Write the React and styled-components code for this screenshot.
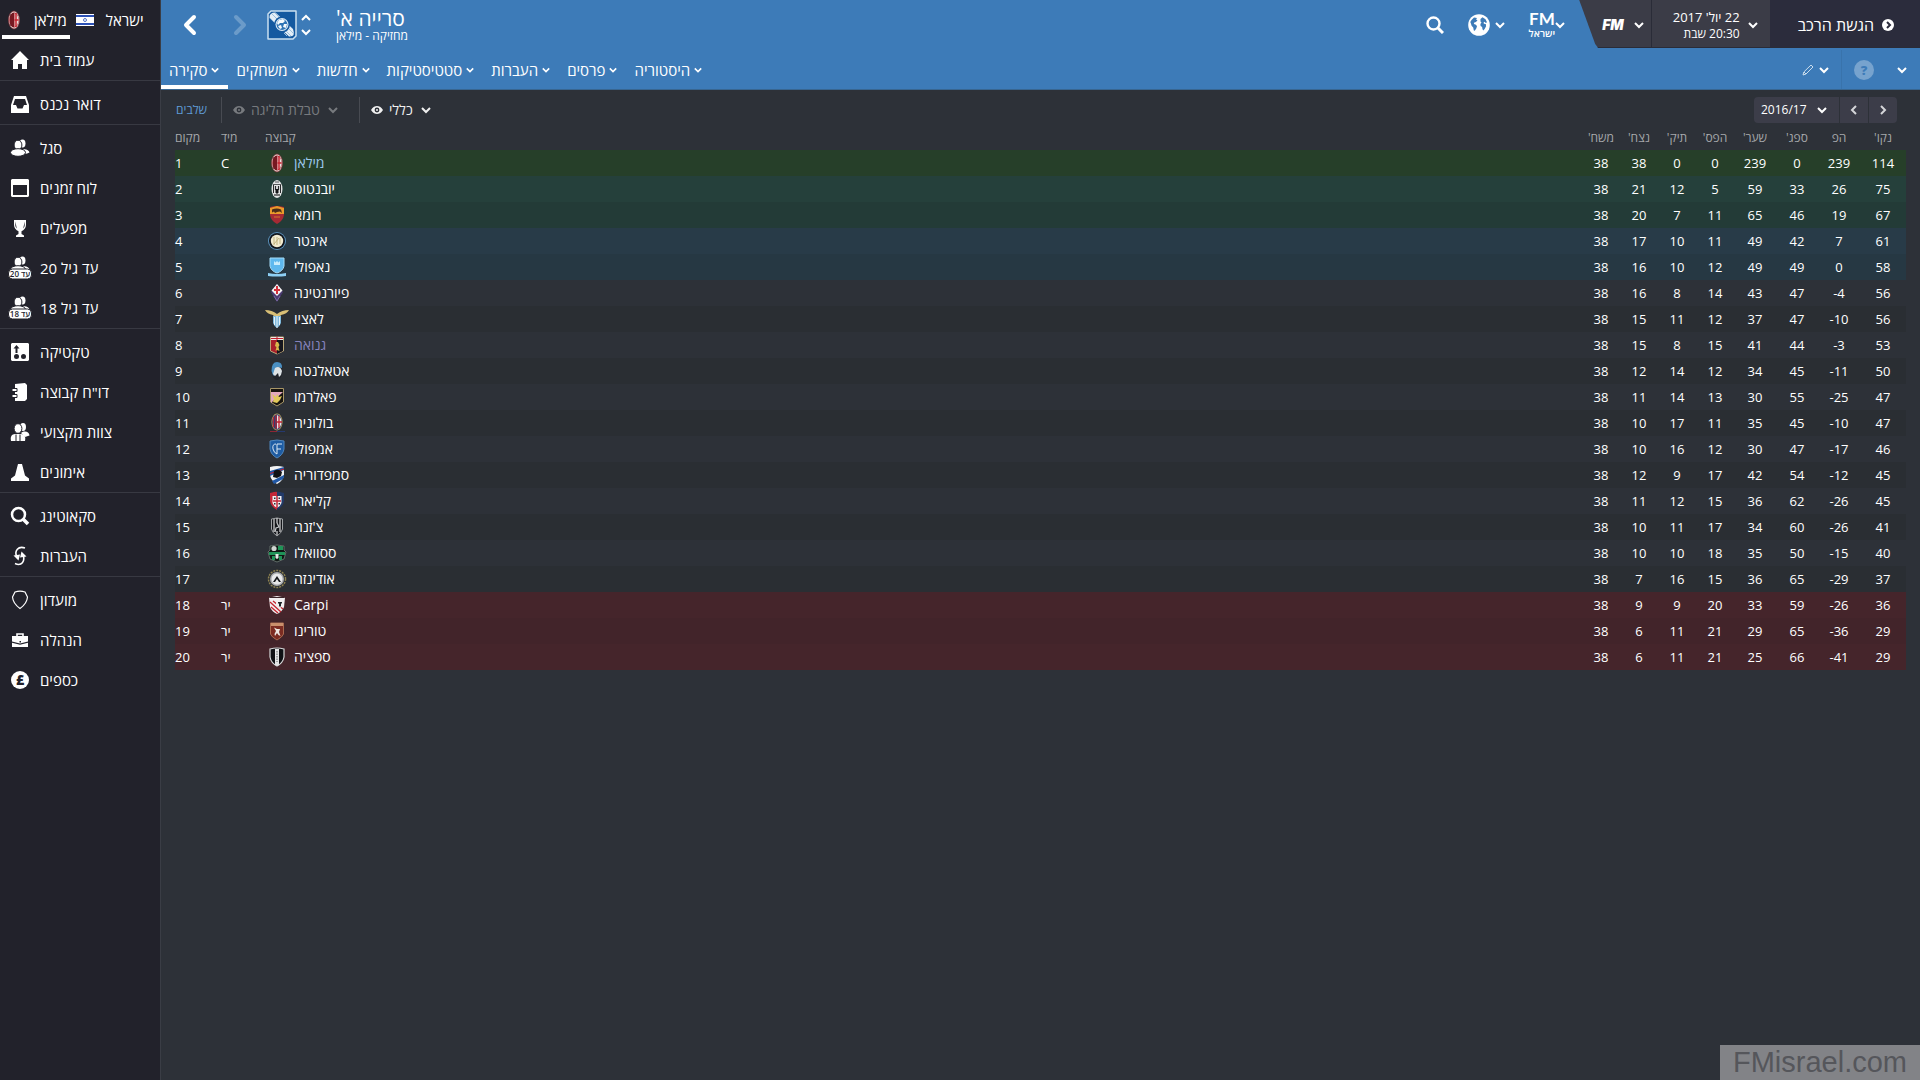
import styled, { createGlobalStyle, css } from "styled-components";

const GlobalStyle = createGlobalStyle`
  * {
    box-sizing: border-box;
  }
  body {
    margin: 0;
    background: #2d3138;
    color: #ffffff;
    font-family: "Open Sans", "Noto Sans", "DejaVu Sans", sans-serif;
    font-size: 13px;
    line-height: 18px;
  }
  button,
  select {
    margin: 0;
    padding: 0;
    border: 0;
    background: none;
    color: inherit;
    font: inherit;
    cursor: pointer;
  }
  a {
    color: inherit;
    text-decoration: none;
  }
  svg {
    display: block;
    flex: none;
  }
`;

/* ---------- icons ---------- */

const Chevron = ({ size = 10, dir = "down", weight = 2 }) => {
  const paths = {
    down: "M1 3l4 4 4-4",
    up: "M1 7l4-4 4 4",
    left: "M7 1L3 5l4 4",
    right: "M3 1l4 4-4 4",
  };
  return (
    <svg width={size} height={size} viewBox="0 0 10 10" fill="none" stroke="currentColor" strokeWidth={weight} aria-hidden="true">
      <path d={paths[dir]} />
    </svg>
  );
};

const Arrow = ({ dir }) => (
  <svg width="14" height="22" viewBox="0 0 14 22" fill="none" stroke="currentColor" strokeWidth="4" strokeLinecap="round" strokeLinejoin="round" aria-hidden="true">
    <path d={dir === "left" ? "M11 3L3 11l8 8" : "M3 3l8 8-8 8"} />
  </svg>
);

const Eye = () => (
  <svg width="12" height="10" viewBox="0 0 12 10" aria-hidden="true">
    <path fill="currentColor" fillRule="evenodd" d="M0 5C2 1.800 4 1 6 1s4 .8 6 4c-2 3.200-4 4-6 4S2 8.200 0 5zm6-2.400a2.400 2.400 0 1 0 0 4.800 2.400 2.400 0 0 0 0-4.800z" />
    <circle cx="6" cy="5" r="1" fill="currentColor" />
  </svg>
);

const Search = ({ size = 18 }) => (
  <svg width={size} height={size} viewBox="0 0 18 18" fill="none" stroke="currentColor" aria-hidden="true">
    <circle cx="7.500" cy="7.500" r="6" strokeWidth="2.400" />
    <path d="M12 12l5 5" strokeWidth="3" />
  </svg>
);

const Globe = () => (
  <svg width="22" height="22" viewBox="0 0 22 22" aria-hidden="true">
    <circle cx="11" cy="11" r="10.800" fill="#fff" />
    <g fill="#3d7bb8">
      <path d="M3.500 6l2.500-2.500 3 .5-1 1.500 1.500.8-1.500 1.800-1.700.4-.5 1.400 1.700.7 1.500 1.300-.6 2.300-1.600 2.600-1-.2-.6-3-1.600-1.800-.7-2.200-.6-1.500z" />
      <path d="M12.500 5l2-1.800 3 2 1.500 3-1.300.8-1-1.300-1.100.8.3 1.300 1.900.3.3 2.100-1.500 2.700-1.300 1.600-.8-1.200-.4-2.300-1.500-1.100-.2-2 1.100-1.400-1-.9z" />
    </g>
  </svg>
);

const Pencil = () => (
  <svg width="12" height="12" viewBox="0 0 12 12" fill="none" stroke="#c9dcec" strokeWidth="1" aria-hidden="true">
    <path d="M1 11l.8-3L9 1l2 2-7 7zM2 8l2 2" />
  </svg>
);

const GoIcon = () => (
  <svg width="12" height="12" viewBox="0 0 12 12" aria-hidden="true">
    <circle cx="6" cy="6" r="6" fill="#fff" />
    <path d="M5 3l3 3-3 3" fill="none" stroke="#2b2c3c" strokeWidth="2" />
  </svg>
);

const LeagueBadge = () => (
  <svg width="30" height="30" viewBox="0 0 30 30" aria-hidden="true">
    <path d="M4 1h25v25l-3 3H1V4z" fill="#1459a0" stroke="#c9dff0" strokeWidth="1.500" strokeLinejoin="round" />
    <path d="M2.500 8q-.5-5.500 6-5.500L26 19q3 8-4 7.500z" fill="#e4eef7" />
    <path d="M8 3l6 6M5 4l7 7M3 8l6 6M19 21l5 5M22 19l5 5M17 23l3 3" stroke="#9cc0de" strokeWidth="1" />
    <circle cx="15" cy="14.500" r="8" fill="#1459a0" />
    <circle cx="15" cy="14.500" r="6.500" fill="#dcebf6" />
    <circle cx="15" cy="14.500" r="5.400" fill="#2f74b5" />
    <path d="M12 10l4-1 2 2-2 2h-3l-2 2-1-2zM17 14h3l-1 4-3-1zM11 16l3-1 1 3-2 1z" fill="#f4f9fc" />
  </svg>
);

const people = (
  <>
    <ellipse cx="12.500" cy="5.500" rx="3" ry="4" />
    <path d="M11 12c4-2 8 0 8.500 2.500-2.500 1.500-5 1.500-7 1z" />
    <ellipse cx="8" cy="7" rx="3.900" ry="4.800" stroke="#22222b" strokeWidth="1" />
    <ellipse cx="8" cy="14.500" rx="7.500" ry="3.800" stroke="#22222b" strokeWidth="1" />
  </>
);

const NAV_ICONS = {
  home: <path d="M10 1l9 9h-2v9h-5v-5H8v5H3v-9H1z" />,
  inbox: <path fillRule="evenodd" d="M4 2h12l3 9v8H1v-8zM5 5l-2 6h3l1.500 3.500h5L14 11h3l-2-6z" />,
  squad: people,
  calendar: <path fillRule="evenodd" d="M2 1h16l1 1v16l-1 1H2l-1-1V2zm1 6v10h14V7z" />,
  trophy: (
    <path fillRule="evenodd" d="M4 2h12v5c0 3-2 5-4.500 6.200V16L14 17.500V19H6v-1.500L8.500 16v-2.800C6 12 4 10 4 7zm1.300 1.500V7c0 1.500.7 2.500 1.500 3.500zm9.400 0L13.200 10.500c.8-1 1.500-2 1.500-3.500z" />
  ),
  tactics: (
    <path fillRule="evenodd" d="M2 1h16l1 1v16l-1 1H2l-1-1V2zm4.500 2L3.500 6.500h2V11h2V6.500h2zm0 9a2.500 2.500 0 1 0 0 5 2.500 2.500 0 0 0 0-5zm7 0a2.500 2.500 0 1 0 0 5 2.500 2.500 0 0 0 0-5z" />
  ),
  report: (
    <>
      <path d="M5 2l10-1 2 2v14l-2 2H5z" />
      <path d="M2 6.500h5v3H2zM2 12.500h5v3H2z" stroke="#22222b" strokeWidth="1" />
    </>
  ),
  staff: (
    <>
      <ellipse cx="13" cy="5" rx="3" ry="4" />
      <path d="M11 11c4-3 8-1 8.500 2.500L15 15z" />
      <ellipse cx="8" cy="6.500" rx="3.900" ry="4.800" stroke="#22222b" strokeWidth="1" />
      <path d="M1 19c-1-5 1-6.500 4-7h6c3 .5 5 2 4 7z" />
      <path d="M6 12.500V19M10 12.500V19" stroke="#22222b" strokeWidth="1" />
    </>
  ),
  cone: <path d="M8 2h4l3 11.500 4 3V19H1v-2.500l4-3z" />,
  search: (
    <g fill="none" stroke="currentColor">
      <circle cx="8.500" cy="8.500" r="6.500" strokeWidth="2.500" />
      <path d="M13 13l5 5" strokeWidth="3.500" />
    </g>
  ),
  transfers: (
    <>
      <path d="M15 2C8-.5 4.500 5 6.500 10M5 17.500c6.500 3 10.500-2 8-9" fill="none" stroke="currentColor" strokeWidth="1.600" />
      <path d="M3.500 9.500l6.500-1-1.500 6zM16.500 10.500l-6.500 1 1.500-6z" />
    </>
  ),
  club: <path d="M5 2q5-1.800 10 0l2.500 5q-.5 6.500-7.500 11.500Q3 13.500 2.500 7z" fill="none" stroke="currentColor" strokeWidth="1.200" />,
  board: (
    <>
      <path d="M7 6V4h6v2" fill="none" stroke="currentColor" strokeWidth="1.600" />
      <path d="M2 6h16v5.500l-8 2-8-2zM2 12.800l8 2 8-2V17H2z" />
      <path d="M9.500 11h1.500v1.500H9.500z" fill="#22222b" />
    </>
  ),
  finance: <circle cx="10" cy="10" r="9" />,
};

const NavIcon = ({ name, age }) => (
  <svg width="24" height="24" viewBox="-2 -2 24 24" fill="currentColor" aria-hidden="true">
    {age ? (
      <>
        <g transform="translate(0 -3)">{people}</g>
        <rect x="-1.500" y="11" width="23" height="10" rx="4" stroke="#22222b" strokeWidth="1" />
        <AgeText x="10" y="19" textAnchor="middle">
          {age}
        </AgeText>
      </>
    ) : (
      NAV_ICONS[name]
    )}
    {name === "finance" && (
      <PoundText x="10" y="15" textAnchor="middle">
        £
      </PoundText>
    )}
  </svg>
);

const AgeText = styled.text`
  font-size: 8px;
  font-weight: 600;
  fill: #22222b;
  direction: rtl;
`;

const PoundText = styled.text`
  font-size: 14px;
  font-weight: 800;
  fill: #22222b;
`;

const SHIELD = "M5 4q7-2 14 0v8q-1 6-7 9-6-3-7-9z";

const CRESTS = {
  milan: (
    <>
      <ellipse cx="12" cy="12" rx="5.500" ry="9" fill="#d8cfcb" />
      <ellipse cx="12" cy="12" rx="4.700" ry="7.500" fill="#b3202c" />
      <path d="M9 6v12M11 5v14" stroke="#3a1016" strokeWidth="1" />
      <path d="M12.500 5q4 2 4 7t-4 7z" fill="#e9e3df" />
      <path d="M14 5v14M12.500 12h4" stroke="#c8202e" strokeWidth="1.500" />
      <ellipse cx="12" cy="12" rx="5.500" ry="9" fill="none" stroke="#8c2630" strokeWidth=".6" />
    </>
  ),
  juventus: (
    <>
      <ellipse cx="12" cy="12" rx="5.500" ry="9" fill="#e4e5e6" />
      <path d="M8.500 8v8M15.500 8v8" stroke="#2a2b2d" strokeWidth="1" />
      <path d="M10.500 9v4M13.500 9v4M12 12v7M10 17v2M14 17v2" stroke="#2a2b2d" strokeWidth="1.200" />
      <path d="M8 7.500h8M10 5h4" stroke="#55575a" strokeWidth="1" />
      <path d="M10.500 12h3v4h-3z" fill="#151618" />
    </>
  ),
  roma: (
    <>
      <path d={SHIELD} fill="#a52a34" />
      <path d="M5 5l7-2 7 2v6H5z" fill="#e99a2b" />
      <path d="M7 6.500q5-2 9 0l1 3.500-2-1.500-3 .5-2 1-1-1.500-2 1z" fill="#4a2c1a" />
      <path d="M9 14h6" stroke="#d9722f" strokeWidth="1" />
    </>
  ),
  inter: (
    <>
      <circle cx="12" cy="12" r="9" fill="#5c93bd" />
      <circle cx="12" cy="12" r="8" fill="#11151c" />
      <circle cx="12" cy="12" r="6.200" fill="#f1ead0" />
      <path d="M9 8v8M12 8v8M9 15l5-6M15 9v6" stroke="#b9a970" strokeWidth=".8" fill="none" />
    </>
  ),
  napoli: (
    <>
      <path d="M5 3h14v8q-1 5-7 7-6-2-7-7z" fill="#5fb9ee" />
      <path d="M5 3h14v8q-1 5-7 7-6-2-7-7z" fill="none" stroke="#a5dcf8" strokeWidth="1" />
      <path d="M9 6l1.500 1.500L12 6l1.500 1.500L15 6v4H9z" fill="#c9ecfb" />
      <path d="M3 18q9 2 18 0v3q-9 1-18 0z" fill="#8dd0f5" />
    </>
  ),
  fiorentina: (
    <>
      <path d="M12 3l6 8-6 10-6-10z" fill="#4b3a72" />
      <path d="M12 3l5.500 6.500L12 15 6.500 9.500z" fill="#f3f0f1" />
      <path d="M12 5v8M9 9h6" stroke="#d2303c" strokeWidth="2" />
      <path d="M9 15l3 5 3-5" fill="none" stroke="#7a6aa0" strokeWidth="1" />
    </>
  ),
  lazio: (
    <>
      <path d="M0 3q7 0 12 4 5-4 12-4-2 4-8 5l-2 3h-4L8 8Q2 7 0 3z" fill="#d9bf76" />
      <path d="M8 9h8v7q-1 3-4 5-3-2-4-5z" fill="#7fb9dd" />
      <path d="M12 9v12M9.500 10v8M14.500 10v8" stroke="#e6f2f9" strokeWidth="1" />
    </>
  ),
  genoa: (
    <>
      <path d="M5.500 4h13v14l-6.500 3-6.500-3z" fill="#a91f2b" stroke="#b9a778" strokeWidth="1" />
      <path d="M12 7h6v11l-6 3z" fill="#15161d" />
      <path d="M6 4h12v3H6z" fill="#eceaea" />
      <path d="M12 3.500V7M6 5.500h12" stroke="#c4202e" strokeWidth="1" />
      <path d="M11 9l2 0 1.500 3-1 2 1 4-2.500-1-1.500 1 1-4-1.500-1z" fill="#d9b74c" />
    </>
  ),
  atalanta: (
    <>
      <ellipse cx="12" cy="12" rx="5.500" ry="9" fill="#20242b" />
      <path d="M6.500 12q0-9 5.500-9t5 6l-4-1-4 9q-2-2-2.500-5z" fill="#4a8fc2" />
      <path d="M10 9q5-3 7 3l-1 4-2 2-1-4-3 3-2-2z" fill="#dde2e5" />
    </>
  ),
  palermo: (
    <>
      <path d="M5.500 3.500h13V17L12 21l-6.500-4z" fill="#17140f" stroke="#a89667" strokeWidth="1" />
      <path d="M6 7h12L6 18z" fill="#e3a9bd" />
      <path d="M7 9l4 3 1-3 2 3 3-1-2 4-3 3-4-1 1-3z" fill="#e2c95a" />
    </>
  ),
  bologna: (
    <>
      <ellipse cx="12" cy="11" rx="5.500" ry="8.500" fill="#c9a95c" />
      <ellipse cx="12" cy="11" rx="4.800" ry="7.800" fill="#2a3f7a" />
      <path d="M8.500 6v10M11 4v14" stroke="#b02535" strokeWidth="1.300" />
      <path d="M12 4q4.500 2 4.500 7t-4.500 7z" fill="#e8e6e8" />
      <path d="M14 5v12M12 11h5" stroke="#c4202e" strokeWidth="1.300" />
      <path d="M5 20.500h7" stroke="#8c2634" strokeWidth="1" />
      <path d="M12 20.500h8" stroke="#25396e" strokeWidth="1" />
    </>
  ),
  empoli: (
    <>
      <path d={SHIELD} fill="#1e5ca3" stroke="#4f86bd" strokeWidth="1" />
      <path d="M11 7q-4 0-3 5 1 4 4 5M12 7h5M12 7v10M12 12h4" fill="none" stroke="#dbe8f4" strokeWidth="1" />
    </>
  ),
  sampdoria: (
    <>
      <path d={SHIELD} fill="#f0f2f4" />
      <path d="M5 8l14-4v3L5 13z" fill="#2158a5" />
      <path d="M7 18l12-6v2l-1 2-9 5z" fill="#2158a5" />
      <path d="M5 10.500l14-4.500" stroke="#c4202e" strokeWidth="1" />
      <path d="M9 8q4-3 8 1l-1 4-4 2-4-1z" fill="#101216" />
    </>
  ),
  cagliari: (
    <>
      <path d="M5 4q7-2 7-1v18q-6-3-7-9z" fill="#c32738" />
      <path d="M19 4q-7-2-7-1v18q6-3 7-9z" fill="#223a68" />
      <path d="M7.500 7h9v7q-1 3-4.500 5-3.500-2-4.500-5z" fill="#f1eff0" />
      <path d="M12 7v12M8 12h8" stroke="#c32738" strokeWidth="1.500" />
      <path d="M9 8.500h1.500V10H9zM13.500 8.500H15V10h-1.500zM9 14h1.500v1.500H9zM13.500 14H15v1.500h-1.500z" fill="#2a2f3a" />
    </>
  ),
  cesena: (
    <>
      <path d="M6.500 4q5.500-2 11 0v10q-1 4-5.500 7-4.500-3-5.500-7z" fill="#14161a" stroke="#9fa2a5" strokeWidth="1" />
      <path d="M9 4v13M15 4v13M12 3v5M12 16v4" stroke="#d9dadb" strokeWidth="1.200" />
      <path d="M12 8l2 4-3 1-1 4" fill="none" stroke="#c3c6c8" strokeWidth="1.200" />
    </>
  ),
  sassuolo: (
    <>
      <path d="M5 5q7-2 14 0v4l2 2-2 7-7 3-7-3-2-7 2-2z" fill="#101815" stroke="#6f7d76" strokeWidth=".8" />
      <path d="M4 11h16v3H4zM7 15h3v4H7zM14 15h3v4h-3zM13 5h5v4h-5z" fill="#1f9358" />
      <circle cx="9" cy="7.500" r="2.600" fill="#cfd5d2" />
      <path d="M10.500 13h3v4l-1.500 1-1.500-1z" fill="#e3e8e5" />
    </>
  ),
  udinese: (
    <>
      <circle cx="12" cy="12" r="8.500" fill="none" stroke="#8e8250" strokeWidth="1.500" strokeDasharray="2 1" />
      <circle cx="12" cy="12" r="7" fill="#a9abac" />
      <circle cx="12" cy="12" r="5.500" fill="#e8e9ea" />
      <path d="M8 15l4-6 4 6-2 0-2-3-2 3z" fill="#17191c" />
    </>
  ),
  carpi: (
    <>
      <path d="M4 5l3-1 5-1 5 1 3 1-1 9q-2 5-7 7-5-2-7-7z" fill="#f2eeef" />
      <path d="M5 9l11 10M6 14l7 6M8 8l10 8" stroke="#c3242f" strokeWidth="1.300" />
      <path d="M11 7h7v6l-3 2-4-3z" fill="#f2eeef" />
      <path d="M13 9h4v1.500h-1v3h-2v-3h-1z" fill="#222428" />
      <path d="M5 4.500h14" stroke="#3a2428" strokeWidth="1" />
    </>
  ),
  torino: (
    <>
      <path d="M5.500 4h13v11q-1 3-6.500 6-5.500-3-6.500-6z" fill="#7c2c22" stroke="#a96a50" strokeWidth="1" />
      <path d="M6 4h12v3H6z" fill="#c98f6c" />
      <path d="M9 8.500l3 1.500 3 0-1 3 1.500 4-2-1-1.500-2-2 3-.5-2 1.500-3z" fill="#eee7e2" />
    </>
  ),
  spezia: (
    <>
      <path d={SHIELD} fill="#0f1114" stroke="#d5d7d8" strokeWidth="1.200" />
      <path d="M10 4h4v16l-2 1-2-1z" fill="#e4e5e6" />
      <path d="M12 6v11" stroke="#8b8e90" strokeWidth="1.500" strokeDasharray="1.500 1" />
    </>
  ),
};

const Crest = ({ club }) => (
  <svg width="24" height="24" viewBox="0 0 24 24" aria-hidden="true">
    {CRESTS[club]}
  </svg>
);

const Flag = () => (
  <svg width="24" height="12" viewBox="-2 0 24 12" aria-hidden="true">
    <path fill="#fff" d="M0 0h18v12H0z" />
    <path fill="#2b50b5" d="M0 1h18v2H0zM0 9h18v2H0z" />
    <circle cx="9" cy="6" r="1.500" fill="none" stroke="#2b50b5" strokeWidth=".8" />
  </svg>
);

/* ---------- data ---------- */

const NAV_GROUPS = [
  [["home", "עמוד בית"]],
  [["inbox", "דואר נכנס"]],
  [
    ["squad", "סגל"],
    ["calendar", "לוח זמנים"],
    ["trophy", "מפעלים"],
    ["u20", "עד גיל 20", "עד 20"],
    ["u18", "עד גיל 18", "עד 18"],
  ],
  [
    ["tactics", "טקטיקה"],
    ["report", 'דו"ח קבוצה'],
    ["staff", "צוות מקצועי"],
    ["cone", "אימונים"],
  ],
  [
    ["search", "סקאוטינג"],
    ["transfers", "העברות"],
  ],
  [
    ["club", "מועדון"],
    ["board", "הנהלה"],
    ["finance", "כספים"],
  ],
];

const TABS = ["סקירה", "משחקים", "חדשות", "סטטיסטיקות", "העברות", "פרסים", "היסטוריה"];

const STAT_COLUMNS = [
  ["משח'", 38],
  ["נצח'", 38],
  ["תיק'", 38],
  ["הפס'", 38],
  ["שער'", 42],
  ["ספג'", 42],
  ["הפ", 42],
  ["נקו'", 46],
];

const TEAMS = [
  ["milan", "מילאן", "C", [38, 38, 0, 0, 239, 0, 239, 114]],
  ["juventus", "יובנטוס", "", [38, 21, 12, 5, 59, 33, 26, 75]],
  ["roma", "רומא", "", [38, 20, 7, 11, 65, 46, 19, 67]],
  ["inter", "אינטר", "", [38, 17, 10, 11, 49, 42, 7, 61]],
  ["napoli", "נאפולי", "", [38, 16, 10, 12, 49, 49, 0, 58]],
  ["fiorentina", "פיורנטינה", "", [38, 16, 8, 14, 43, 47, -4, 56]],
  ["lazio", "לאציו", "", [38, 15, 11, 12, 37, 47, -10, 56]],
  ["genoa", "גנואה", "", [38, 15, 8, 15, 41, 44, -3, 53]],
  ["atalanta", "אטאלנטה", "", [38, 12, 14, 12, 34, 45, -11, 50]],
  ["palermo", "פאלרמו", "", [38, 11, 14, 13, 30, 55, -25, 47]],
  ["bologna", "בולוניה", "", [38, 10, 17, 11, 35, 45, -10, 47]],
  ["empoli", "אמפולי", "", [38, 10, 16, 12, 30, 47, -17, 46]],
  ["sampdoria", "סמפדוריה", "", [38, 12, 9, 17, 42, 54, -12, 45]],
  ["cagliari", "קליארי", "", [38, 11, 12, 15, 36, 62, -26, 45]],
  ["cesena", "צ'זנה", "", [38, 10, 11, 17, 34, 60, -26, 41]],
  ["sassuolo", "ססוואלו", "", [38, 10, 10, 18, 35, 50, -15, 40]],
  ["udinese", "אודינזה", "", [38, 7, 16, 15, 36, 65, -29, 37]],
  ["carpi", "Carpi", "יר", [38, 9, 9, 20, 33, 59, -26, 36]],
  ["torino", "טורינו", "יר", [38, 6, 11, 21, 29, 65, -36, 29]],
  ["spezia", "ספציה", "יר", [38, 6, 11, 21, 25, 66, -41, 29]],
];

const NAME_COLORS = { milan: "#9cc8ec", genoa: "#8683bd" };

const zoneOf = (index) => {
  if (index === 0) return "champion";
  if (index < 3) return "champions";
  if (index < 5) return "europa";
  if (index > 16) return "relegation";
  return "none";
};

/* ---------- page ---------- */

const App = () => {
  return (
    <>
      <GlobalStyle />
      <Page>
        <Sidebar>
          <ClubTabs>
            <ClubTab href="#club" $active>
              <Crest club="milan" />
              <span>מילאן</span>
            </ClubTab>
            <ClubTab href="#nation">
              <Flag />
              <span>ישראל</span>
            </ClubTab>
          </ClubTabs>
          <nav>
            {NAV_GROUPS.map((group) => (
              <NavGroup key={group[0][0]}>
                {group.map(([name, label, age]) => (
                  <NavLink key={name} href={`#${name}`}>
                    <NavIcon name={name} age={age} />
                    <span dir="rtl">{label}</span>
                  </NavLink>
                ))}
              </NavGroup>
            ))}
          </nav>
        </Sidebar>

        <Main>
          <Header>
            <TopBar>
              <History>
                <IconButton aria-label="Back">
                  <Arrow dir="left" />
                </IconButton>
                <IconButton aria-label="Forward" $faded>
                  <Arrow dir="right" />
                </IconButton>
              </History>
              <LeagueBadge />
              <Stepper>
                <IconButton aria-label="Previous league">
                  <Chevron dir="up" />
                </IconButton>
                <IconButton aria-label="Next league">
                  <Chevron />
                </IconButton>
              </Stepper>
              <Titles>
                <Title>סרייה א'</Title>
                <Subtitle>מחזיקה - מילאן</Subtitle>
              </Titles>
              <Tools>
                <IconButton aria-label="Search">
                  <Search />
                </IconButton>
                <ToolButton aria-label="World">
                  <Globe />
                  <Chevron />
                </ToolButton>
                <FmButton>
                  <FmMark>
                    <b>FM</b>
                    <small>ישראל</small>
                  </FmMark>
                  <Chevron />
                </FmButton>
              </Tools>
              <Status>
                <FmMenu>
                  <i>FM</i>
                  <Chevron />
                </FmMenu>
                <DateMenu>
                  <DateText>
                    <span>22 יול' 2017</span>
                    <small>20:30 שבת</small>
                  </DateText>
                  <Chevron />
                </DateMenu>
                <Continue>
                  <span>הגשת הרכב</span>
                  <GoIcon />
                </Continue>
              </Status>
            </TopBar>
            <TabBar>
              {TABS.map((tab, i) => (
                <Tab key={tab} $active={i === 0}>
                  {tab}
                  <Chevron size={8} />
                </Tab>
              ))}
              <TabTools>
                <ToolButton aria-label="Edit">
                  <Pencil />
                  <Chevron />
                </ToolButton>
                <HelpArea>
                  <Help aria-label="Help">?</Help>
                  <IconButton aria-label="More">
                    <Chevron />
                  </IconButton>
                </HelpArea>
              </TabTools>
            </TabBar>
          </Header>

          <FilterBar>
            <StagesLink href="#stages">שלבים</StagesLink>
            <Filter $muted>
              <Eye />
              <FilterSelect aria-label="טבלת הליגה">
                <option>טבלת הליגה</option>
              </FilterSelect>
              <SelectArrow>
                <Chevron />
              </SelectArrow>
            </Filter>
            <Filter>
              <Eye />
              <FilterSelect aria-label="כללי">
                <option>כללי</option>
              </FilterSelect>
              <SelectArrow>
                <Chevron />
              </SelectArrow>
            </Filter>
            <Season>
              <SeasonPicker>
                <SeasonSelect aria-label="2016/17">
                  <option>2016/17</option>
                </SeasonSelect>
                <SelectArrow>
                  <Chevron />
                </SelectArrow>
              </SeasonPicker>
              <SeasonStep aria-label="Previous season">
                <Chevron dir="left" />
              </SeasonStep>
              <SeasonStep aria-label="Next season">
                <Chevron dir="right" />
              </SeasonStep>
            </Season>
          </FilterBar>

          <Table>
            <colgroup>
              <Col $width={46} />
              <Col $width={44} />
              <col />
              {STAT_COLUMNS.map(([label, width]) => (
                <Col key={label} $width={width} />
              ))}
            </colgroup>
            <thead>
              <tr>
                <HeadCell>מקום</HeadCell>
                <HeadCell>מיד</HeadCell>
                <HeadCell>קבוצה</HeadCell>
                {STAT_COLUMNS.map(([label]) => (
                  <HeadCell key={label} $center>
                    <span dir="rtl">{label}</span>
                  </HeadCell>
                ))}
              </tr>
            </thead>
            <tbody>
              {TEAMS.map(([club, name, info, stats], index) => (
                <Row key={club} $zone={zoneOf(index)}>
                  <Cell>{index + 1}</Cell>
                  <Cell>{info}</Cell>
                  <Cell>
                    <Team href={`#${club}`} $color={NAME_COLORS[club]}>
                      <Crest club={club} />
                      {name}
                    </Team>
                  </Cell>
                  {stats.map((value, i) => (
                    <Cell key={i} $center>
                      {value}
                    </Cell>
                  ))}
                </Row>
              ))}
            </tbody>
          </Table>
        </Main>
      </Page>
      <Watermark>FMisrael.com</Watermark>
    </>
  );
};

const Page = styled.div`
  display: grid;
  grid-template-columns: 161px 1fr;
  min-height: 100vh;
`;

const Sidebar = styled.aside`
  background: #22222b;
  border-right: 1px solid #3a3d45;
  font-size: 15px;
`;

const ClubTabs = styled.div`
  display: flex;
  gap: 4px;
  height: 40px;
  padding: 0 2px;
`;

const ClubTab = styled.a`
  display: flex;
  align-items: center;
  gap: 8px;
  height: 39px;
  padding: 4px 3px 0 0;
  border-bottom: 4px solid ${({ $active }) => ($active ? "#ffffff" : "transparent")};
`;

const NavGroup = styled.div`
  &:not(:last-child) {
    margin-bottom: 3px;
    border-bottom: 1px solid #383942;
  }
`;

const NavLink = styled.a`
  display: flex;
  align-items: center;
  gap: 8px;
  height: 40px;
  padding-left: 8px;
`;

const Main = styled.main`
  min-width: 0;
`;

const Header = styled.header`
  background: #3d7bb8;
  border-bottom: 1px solid #386691;
`;

const TopBar = styled.div`
  display: flex;
  align-items: center;
  height: 50px;
  padding-left: 22px;
`;

const History = styled.div`
  display: flex;
  gap: 36px;
  margin-right: 20px;
`;

const IconButton = styled.button`
  color: ${({ $faded }) => ($faded ? "#6b9bc9" : "#ffffff")};
`;

const Stepper = styled.div`
  display: flex;
  flex-direction: column;
  gap: 4px;
  margin: 0 25px 0 4px;
`;

const Titles = styled.div`
  direction: rtl;
`;

const Title = styled.h1`
  margin: 0;
  font-size: 21px;
  line-height: 22px;
  font-weight: 400;
  text-align: left;
`;

const Subtitle = styled.div`
  font-size: 12px;
  line-height: 14px;
`;

const Tools = styled.div`
  display: flex;
  align-items: center;
  gap: 24px;
  margin-left: auto;
  margin-right: 14px;
`;

const ToolButton = styled.button`
  display: flex;
  align-items: center;
  gap: 5px;
`;

const FmButton = styled.button`
  display: flex;
  align-items: center;
`;

const FmMark = styled.span`
  display: flex;
  flex-direction: column;
  align-items: center;
  b {
    font-family: Lato, sans-serif;
    font-size: 17px;
    line-height: 16px;
    font-weight: 700;
  }
  small {
    font-size: 10px;
    line-height: 12px;
    font-weight: 600;
  }
`;

const Status = styled.div`
  display: flex;
  align-self: flex-start;
  height: 48px;
  background: #3b3c47;
  border-bottom: 1px solid #2a2c38;
  clip-path: polygon(0 0, 100% 0, 100% 100%, 19px 100%, 16px 44px);
`;

const panel = css`
  display: flex;
  align-items: center;
  padding-top: 2px;
`;

const FmMenu = styled.button`
  ${panel}
  gap: 10px;
  padding-left: 23px;
  padding-right: 7px;
  border-right: 1px solid #2a2c38;
  i {
    font-family: Inter, sans-serif;
    font-size: 14px;
    font-weight: 900;
  }
`;

const DateMenu = styled.button`
  ${panel}
  gap: 8px;
  padding-left: 21px;
  padding-right: 12px;
`;

const DateText = styled.span`
  display: flex;
  flex-direction: column;
  direction: rtl;
  text-align: right;
  small {
    font-size: 12px;
    line-height: 16px;
  }
`;

const Continue = styled.button`
  ${panel}
  gap: 8px;
  padding-left: 28px;
  padding-right: 26px;
  background: #2b2c3c;
  font-size: 16px;
`;

const TabBar = styled.nav`
  display: flex;
  height: 39px;
`;

const Tab = styled.button`
  display: flex;
  align-items: center;
  gap: 4px;
  padding: 4px 9px 0 8px;
  border-bottom: 4px solid ${({ $active }) => ($active ? "#ffffff" : "transparent")};
  font-size: 15px;
`;

const TabTools = styled.div`
  display: flex;
  align-items: center;
  gap: 12px;
  margin-left: auto;
`;

const HelpArea = styled.div`
  display: flex;
  align-items: center;
  align-self: stretch;
  gap: 23px;
  padding: 0 13px 0 12px;
  border-left: 1px solid #3973ac;
`;

const Help = styled.button`
  width: 20px;
  height: 20px;
  border-radius: 50%;
  background: #77a3ce;
  color: #3d7bb8;
  font-weight: 800;
  line-height: 20px;
`;

const FilterBar = styled.div`
  display: flex;
  align-items: center;
  height: 40px;
  padding: 0 23px 0 15px;
`;

const StagesLink = styled.a`
  margin-right: 14px;
  color: #5f9bd6;
  font-size: 12px;
`;

const Filter = styled.div`
  position: relative;
  display: flex;
  align-items: center;
  gap: 6px;
  height: 26px;
  padding: 0 21px 0 11px;
  border-left: 1px solid #484b52;
  color: ${({ $muted }) => ($muted ? "#777a7e" : "#f0f0f0")};
`;

const FilterSelect = styled.select`
  appearance: none;
  padding-right: 18px;
  font-size: 14px;
`;

const SelectArrow = styled.span`
  position: absolute;
  top: 8px;
  right: 21px;
  pointer-events: none;
`;

const Season = styled.div`
  display: flex;
  gap: 1px;
  height: 26px;
  margin-left: auto;
  border-radius: 4px;
  overflow: hidden;
`;

const SeasonPicker = styled.div`
  position: relative;
  background: #3c3d49;
  ${SelectArrow} {
    right: 12px;
  }
`;

const SeasonSelect = styled.select`
  appearance: none;
  width: 85px;
  height: 26px;
  padding-left: 7px;
  font-size: 12px;
`;

const SeasonStep = styled.button`
  display: grid;
  place-items: center;
  width: 28px;
  background: #3c3d49;
  color: #d5d6d9;
`;

const Table = styled.table`
  width: calc(100% - 28px);
  margin: 0 14px;
  border-collapse: collapse;
  table-layout: fixed;
`;

const Col = styled.col`
  width: ${({ $width }) => $width}px;
`;

const HeadCell = styled.th`
  height: 20px;
  padding: 0;
  color: #a6a8ab;
  font-size: 12px;
  line-height: 16px;
  font-weight: 400;
  vertical-align: top;
  text-align: ${({ $center }) => ($center ? "center" : "left")};
`;

const ZONES = {
  champion: ["#263f29", "#263f29"],
  champions: ["#233b37", "#25403b"],
  europa: ["#263843", "#283b48"],
  none: ["#2a2e33", "#2d3138"],
  relegation: ["#42242a", "#45252b"],
};

const Row = styled.tr`
  background: ${({ $zone }) => ZONES[$zone][0]};
  &:nth-child(even) {
    background: ${({ $zone }) => ZONES[$zone][1]};
  }
`;

const Cell = styled.td`
  height: 26px;
  padding: 0;
  text-align: ${({ $center }) => ($center ? "center" : "left")};
`;

const Team = styled.a`
  display: inline-flex;
  align-items: center;
  gap: 5px;
  height: 26px;
  vertical-align: top;
  font-size: 14px;
  color: ${({ $color }) => $color || "#ffffff"};
`;

const Watermark = styled.div`
  position: fixed;
  right: 0;
  bottom: 0;
  padding: 0 13px;
  background: #828387;
  color: #55565b;
  font-family: "Liberation Sans", Arial, sans-serif;
  font-size: 29px;
  line-height: 35px;
`;

export default App;
